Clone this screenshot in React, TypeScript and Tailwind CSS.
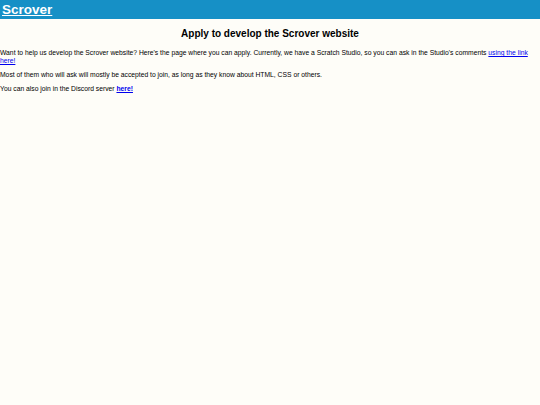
export default function App() {
  return (
    <div className="min-h-screen bg-[#fefdf8] text-black font-['Liberation_Sans',Arial,sans-serif]">
      {/* Top bar */}
      <div className="h-[19px] bg-[#1690c6] flex items-center px-[2px]">
        <a href="#" className="text-white font-bold text-[13.5px] leading-none underline">
          Scrover
        </a>
      </div>

      <div>
        <h1 className="text-center font-bold text-[10px] leading-[12px] mt-[9px] mb-[9px]">
          Apply to develop the Scrover website
        </h1>

        <p className="text-[6.75px] leading-[7.5px] mb-[6.5px]">
          Want to help us develop the Scrover website? Here's the page where you can apply. Currently, we
          have a Scratch Studio, so you can ask in the Studio's comments{' '}
          <a href="#" className="text-[#0000ee] underline">
            using the link here!
          </a>
        </p>

        <p className="text-[6.75px] leading-[7.5px] mb-[6.5px]">
          Most of them who will ask will mostly be accepted to join, as long as they know about HTML, CSS or
          others.
        </p>

        <p className="text-[6.75px] leading-[7.5px]">
          You can also join in the Discord server{' '}
          <a href="#" className="text-[#0000ee] underline font-bold">
            here!
          </a>
        </p>
      </div>
    </div>
  );
}
